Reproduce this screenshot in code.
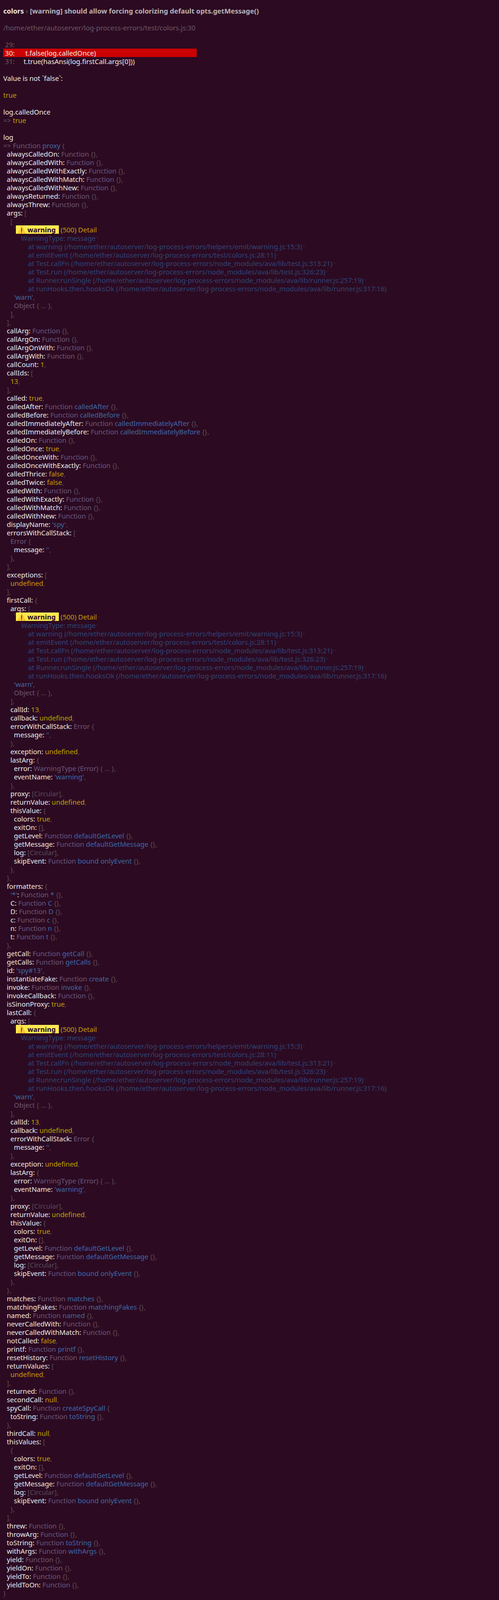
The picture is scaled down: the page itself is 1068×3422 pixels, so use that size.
import React from "react";

const C = {
  w: "text-[#eeeeec]",
  f: "text-[#6e5878]",
  n: "text-[#3f6aa8]",
  p: "text-[#5c4a55]",
  y: "text-[#c4a000]",
  s: "text-[#3f6aa8]",
  g: "text-[#6b5866]",
  st: "text-[#2f4675]",
  lf: "text-[#5c4a55] text-[9px] align-top",
};

const sp = (i) => " ".repeat(i);
const fn = (i, k, name) =>
  name
    ? [["w", sp(i) + k + ": "], ["f", "Function "], ["n", name + " "], ["p", "{},"]]
    : [["w", sp(i) + k + ": "], ["f", "Function "], ["p", "{},"]];
const val = (i, k, v) => [["w", sp(i) + k + ": "], ["y", v], ["p", ","]];
const str = (i, k, v) => [["w", sp(i) + k + ": "], ["s", "'" + v + "'"], ["p", ","]];
const open = (i, k, b) => [["w", sp(i) + k + ": "], ["p", b]];
const cl = (i, b) => [["p", sp(i) + b]];

const frames = [
  "at warning (/home/ether/autoserver/log-process-errors/helpers/emit/warning.js:15:3)",
  "at emitEvent (/home/ether/autoserver/log-process-errors/test/colors.js:28:11)",
  "at Test.callFn (/home/ether/autoserver/log-process-errors/node_modules/ava/lib/test.js:313:21)",
  "at Test.run (/home/ether/autoserver/log-process-errors/node_modules/ava/lib/test.js:326:23)",
  "at Runner.runSingle (/home/ether/autoserver/log-process-errors/node_modules/ava/lib/runner.js:257:19)",
  "at runHooks.then.hooksOk (/home/ether/autoserver/log-process-errors/node_modules/ava/lib/runner.js:317:16)",
];

const warnBlock = (i) => [
  [["p", sp(i) + "`"], ["badge", "⚠ warning "], ["y", " (500) Detail"], ["lf", "␊"]],
  [["st", sp(i + 4) + "WarningType: message"], ["lf", "␊"]],
  ...frames.map((fr, idx) =>
    idx < 5 ? [["st", sp(i + 8) + fr], ["lf", "␊"]] : [["st", sp(i + 8) + fr]]
  ),
  [["s", sp(i) + "'warn'"], ["p", ","]],
  [["f", sp(i) + "Object "], ["p", "{ … },"]],
];

const thisValue = (i) => [
  [["w", sp(i) + "colors: "], ["y", "true"], ["p", ","]],
  [["w", sp(i) + "exitOn: "], ["p", "[],"]],
  fn(i, "getLevel", "defaultGetLevel"),
  fn(i, "getMessage", "defaultGetMessage"),
  [["w", sp(i) + "log: "], ["p", "[Circular],"]],
  fn(i, "skipEvent", "bound onlyEvent"),
];

const call = (k) => [
  open(2, k, "{"),
  open(4, "args", "["),
  ...warnBlock(6),
  cl(4, "],"),
  val(4, "callId", "13"),
  val(4, "callback", "undefined"),
  [["w", "    errorWithCallStack: "], ["f", "Error "], ["p", "{"]],
  str(6, "message", ""),
  cl(4, "},"),
  val(4, "exception", "undefined"),
  open(4, "lastArg", "{"),
  [["w", "      error: "], ["f", "WarningType (Error) "], ["p", "{ … },"]],
  str(6, "eventName", "warning"),
  cl(4, "},"),
  [["w", "    proxy: "], ["p", "[Circular],"]],
  val(4, "returnValue", "undefined"),
  open(4, "thisValue", "{"),
  ...thisValue(6),
  cl(4, "},"),
  cl(2, "},"),
];

const lines = [
  "title",
  [],
  [["g", "/home/ether/autoserver/log-process-errors/test/colors.js:30"]],
  [],
  [["g", " 29:"]],
  "hl",
  [["g", " 31:"], ["w", "     t.true(hasAnsi(log.firstCall.args[0]))"]],
  [],
  [["w", "Value is not `false`:"]],
  [],
  [["y", "true"]],
  [],
  [["w", "log.calledOnce"]],
  [["g", "=> "], ["y", "true"]],
  [],
  [["w", "log"]],
  [["g", "=> "], ["f", "Function "], ["n", "proxy "], ["p", "{"]],
  fn(2, "alwaysCalledOn"),
  fn(2, "alwaysCalledWith"),
  fn(2, "alwaysCalledWithExactly"),
  fn(2, "alwaysCalledWithMatch"),
  fn(2, "alwaysCalledWithNew"),
  fn(2, "alwaysReturned"),
  fn(2, "alwaysThrew"),
  open(2, "args", "["),
  cl(4, "["),
  ...warnBlock(6),
  cl(4, "],"),
  cl(2, "],"),
  fn(2, "callArg"),
  fn(2, "callArgOn"),
  fn(2, "callArgOnWith"),
  fn(2, "callArgWith"),
  val(2, "callCount", "1"),
  open(2, "callIds", "["),
  [["y", "    13"], ["p", ","]],
  cl(2, "],"),
  val(2, "called", "true"),
  fn(2, "calledAfter", "calledAfter"),
  fn(2, "calledBefore", "calledBefore"),
  fn(2, "calledImmediatelyAfter", "calledImmediatelyAfter"),
  fn(2, "calledImmediatelyBefore", "calledImmediatelyBefore"),
  fn(2, "calledOn"),
  val(2, "calledOnce", "true"),
  fn(2, "calledOnceWith"),
  fn(2, "calledOnceWithExactly"),
  val(2, "calledThrice", "false"),
  val(2, "calledTwice", "false"),
  fn(2, "calledWith"),
  fn(2, "calledWithExactly"),
  fn(2, "calledWithMatch"),
  fn(2, "calledWithNew"),
  str(2, "displayName", "spy"),
  open(2, "errorsWithCallStack", "["),
  [["f", "    Error "], ["p", "{"]],
  str(6, "message", ""),
  cl(4, "},"),
  cl(2, "],"),
  open(2, "exceptions", "["),
  [["y", "    undefined"], ["p", ","]],
  cl(2, "],"),
  ...call("firstCall"),
  open(2, "formatters", "{"),
  [["s", "    '*'"], ["w", ": "], ["f", "Function "], ["n", "* "], ["p", "{},"]],
  fn(4, "C", "C"),
  fn(4, "D", "D"),
  fn(4, "c", "c"),
  fn(4, "n", "n"),
  fn(4, "t", "t"),
  cl(2, "},"),
  fn(2, "getCall", "getCall"),
  fn(2, "getCalls", "getCalls"),
  str(2, "id", "spy#13"),
  fn(2, "instantiateFake", "create"),
  fn(2, "invoke", "invoke"),
  fn(2, "invokeCallback"),
  val(2, "isSinonProxy", "true"),
  ...call("lastCall"),
  fn(2, "matches", "matches"),
  fn(2, "matchingFakes", "matchingFakes"),
  fn(2, "named", "named"),
  fn(2, "neverCalledWith"),
  fn(2, "neverCalledWithMatch"),
  val(2, "notCalled", "false"),
  fn(2, "printf", "printf"),
  fn(2, "resetHistory", "resetHistory"),
  open(2, "returnValues", "["),
  [["y", "    undefined"], ["p", ","]],
  cl(2, "],"),
  fn(2, "returned"),
  val(2, "secondCall", "null"),
  [["w", "  spyCall: "], ["f", "Function "], ["n", "createSpyCall "], ["p", "{"]],
  fn(4, "toString", "toString"),
  cl(2, "},"),
  val(2, "thirdCall", "null"),
  open(2, "thisValues", "["),
  cl(4, "{"),
  ...thisValue(6),
  cl(4, "},"),
  cl(2, "],"),
  fn(2, "threw"),
  fn(2, "throwArg"),
  fn(2, "toString", "toString"),
  fn(2, "withArgs", "withArgs"),
  fn(2, "yield"),
  fn(2, "yieldOn"),
  fn(2, "yieldTo"),
  fn(2, "yieldToOn"),
  cl(0, "}"),
];

function Line({ line }) {
  if (line === "title") {
    return (
      <div className="h-[18px] font-bold">
        <span className="text-[#eeeeec]">colors</span>
        <span className="text-[#5c4a55]"> › </span>
        <span className="text-[#b9b3b6]">[warning] should allow forcing colorizing default opts.getMessage()</span>
      </div>
    );
  }
  if (line === "hl") {
    return (
      <div className="h-[18px] w-[414px] bg-[#cc0000] text-[#eeeeec]">{" 30:      t.false(log.calledOnce)"}</div>
    );
  }
  return (
    <div className="h-[18px]">
      {line.map(([t, text], i) =>
        t === "badge" ? (
          <span key={i} className="bg-[#fce94f] text-[#2c0a22] font-bold px-[3px] inline-block h-[18px]">
            {text}
          </span>
        ) : (
          <span key={i} className={C[t]}>
            {text}
          </span>
        )
      )}
    </div>
  );
}

export default function App() {
  return (
    <div className="min-h-[3422px] w-[1068px] overflow-hidden bg-[#2c0a22] pt-[14px] pl-[7px] whitespace-pre font-['DejaVu_Sans_Mono'] text-[14.6px] leading-[18px]">
      {lines.map((l, i) => (
        <Line key={i} line={l} />
      ))}
    </div>
  );
}
